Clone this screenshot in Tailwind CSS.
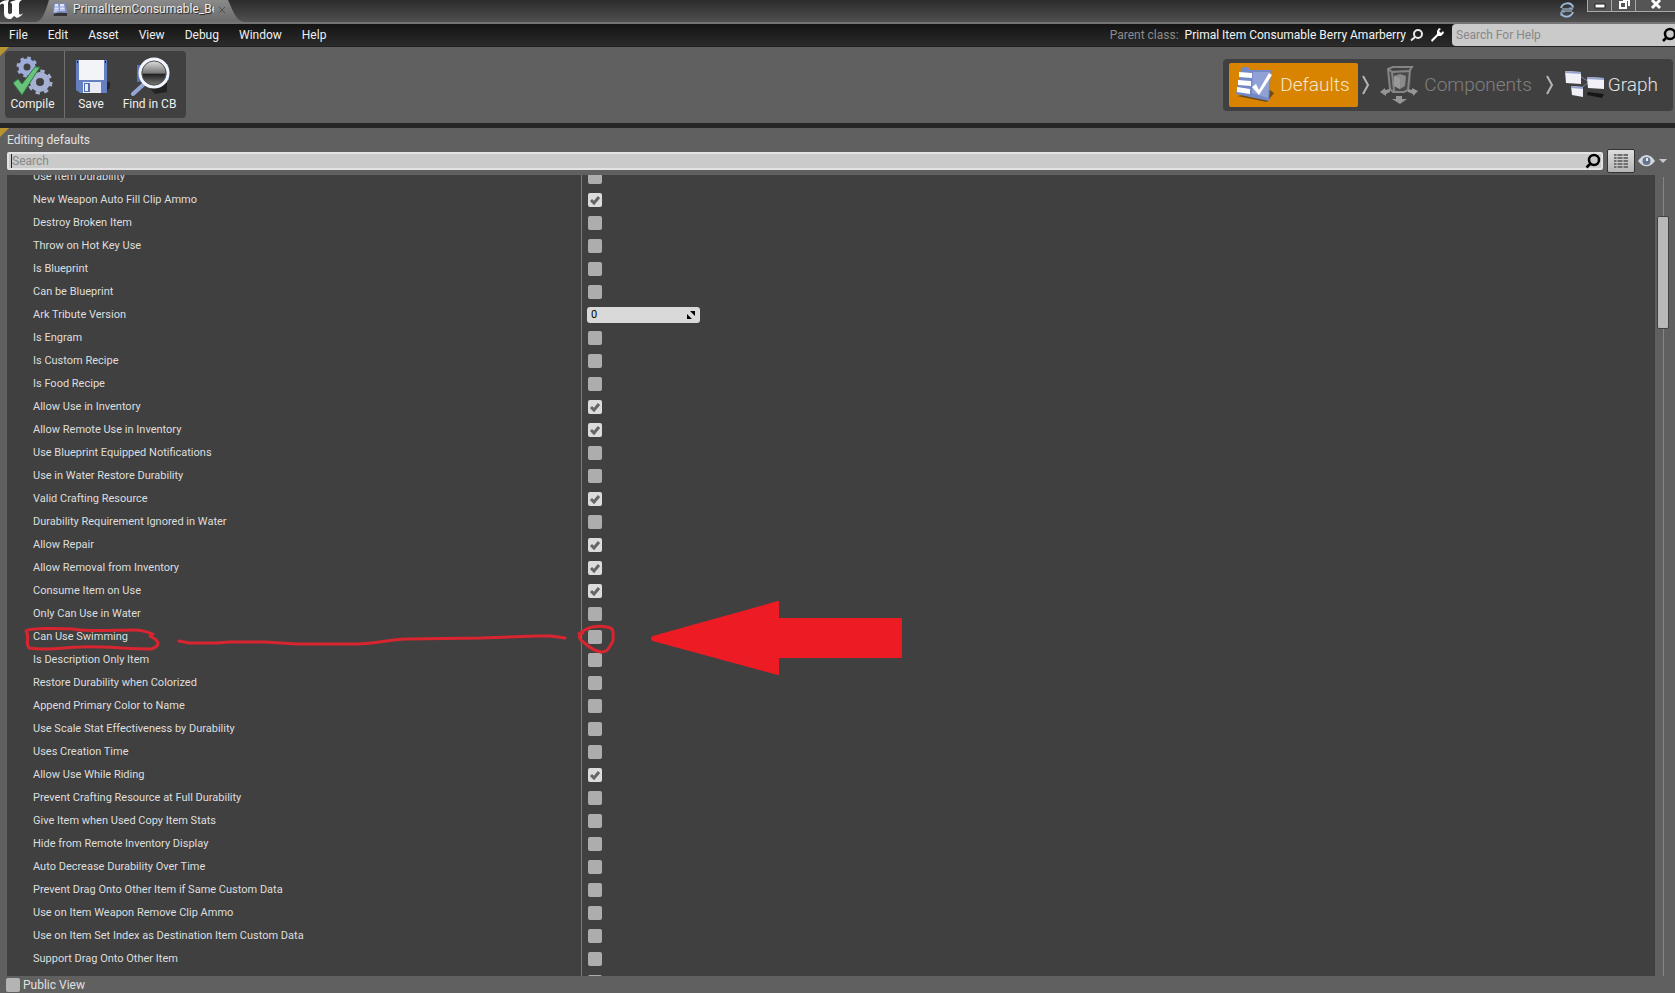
<!DOCTYPE html>
<html lang="en">
<head>
<meta charset="utf-8">
<title>PrimalItemConsumable_Berry</title>
<script src="https://cdn.jsdelivr.net/npm/@tailwindcss/browser@4"></script>
</head>
<body class="relative flex h-screen flex-col overflow-hidden bg-[#606060] font-['Roboto',sans-serif] text-xs leading-4 text-[#e0e0e0]">

<header class="flex h-[22px] shrink-0 items-start bg-linear-to-b from-[#2c2c2c] to-[#505050]">
  <svg class="h-[22px] w-9 shrink-0" viewBox="0 0 36 22" fill="#fff" aria-label="Unreal Engine" role="img">
    <path d="M0 3C2 1 5 0 9 0L8 3v9c0 2 2 3 4 1V4l-2-2 6-2h6c-2 1-3 2-3 5v8c0 2 2 2 4 0-1 3-4 4-6 5l-3-2-3 3c-5 0-7-2-7-6V5C3 3 1 4 0 5z"/>
  </svg>
  <div class="relative flex h-[22px] w-[208px] shrink-0 items-start">
    <svg class="absolute inset-0 h-[22px] w-[208px]" viewBox="0 0 208 22" aria-hidden="true">
      <defs><linearGradient id="tab" x2="0" y2="1"><stop stop-color="#8a8a8a"/><stop offset="1" stop-color="#6b6b6b"/></linearGradient></defs>
      <path d="M0 22c6-2 8-6 13-22h179c7 16 9 20 16 22z" fill="url(#tab)"/>
    </svg>
    <svg class="relative ml-4 mt-px h-4 w-4" viewBox="0 0 16 16" aria-hidden="true">
      <path d="M1 12l14 0v3l-13 0z" fill="#333"/><path d="M2 3l4-1 2 1 5-1 2 10-6-1-8 2z" fill="#7d92cd"/><path d="M3 3l3 0 1 7-5 1zM8 3l4 0 1 7-5 0z" fill="#dfe6fb"/><path d="M2 6h11M2 9h12" stroke="#8fa0d8"/>
    </svg>
    <span class="relative ml-[5px] mt-px w-[141px] overflow-hidden whitespace-nowrap text-[#ededed] [text-shadow:1px_1px_1px_#222]">PrimalItemConsumable_Be</span>
    <button class="relative ml-1 mt-1.5 h-2 w-2" aria-label="Close tab"><svg viewBox="0 0 8 8" class="h-2 w-2" stroke="#505050"><path d="M1 1l6 6M7 1l-6 6"/></svg></button>
  </div>
  <div class="ml-auto flex items-start">
    <svg class="mr-3 mt-0.5 h-4 w-4" viewBox="0 0 16 16" fill="none" aria-hidden="true">
      <path d="M2 6c2-6 10-6 12-1M14 10c-2 6-10 6-12 1" stroke="#9db9dc" stroke-width="2"/><path d="M14 3v3h-4M2 14v-4h4" stroke="#8aa9cf" stroke-width="1"/><path d="M3 7h11M2 9h11" stroke="#b9cfeb" stroke-width="1"/>
    </svg>
    <button class="flex h-3 w-[25px] justify-center border border-t-0 border-[#aaa] bg-[#555]" aria-label="Minimize"><svg class="h-3 w-3" viewBox="0 0 12 12"><path d="M1 4h10v4H1z" fill="#fff" stroke="#222"/></svg></button>
    <button class="flex h-3 w-6 justify-center border border-t-0 border-l-0 border-[#aaa] bg-[#555]" aria-label="Restore"><svg class="h-3 w-3" viewBox="0 0 12 12" fill="none" stroke="#fff" stroke-width="2"><path d="M2 2h6v6H2zM5 0h6v6"/></svg></button>
    <button class="flex h-3 w-[39px] justify-center border-b border-[#aaa] bg-[#555]" aria-label="Close"><svg class="h-3 w-3" viewBox="0 0 12 12" stroke="#fff" stroke-width="3"><path d="M2 0l8 8M10 0l-8 8"/></svg></button>
  </div>
</header>

<div class="flex h-6 shrink-0 items-center border-t-2 border-[#757575] bg-linear-to-b from-[#141414] to-[#2b2b2b]">
  <nav class="flex gap-5 pl-[9px] text-[#efefef]">
    <button>File</button><button>Edit</button><button>Asset</button><button>View</button><button>Debug</button><button>Window</button><button>Help</button>
  </nav>
  <div class="ml-auto flex h-full items-center">
    <span class="text-[#8c8c8c]">Parent class:</span>
    <a href="#" class="ml-1.5 text-[#f4f4f4]">Primal Item Consumable Berry Amarberry</a>
    <button class="ml-1" aria-label="Find parent class"><svg class="h-3.5 w-3.5" viewBox="0 0 14 14" fill="none" stroke="#e8e8e8" stroke-width="2"><circle cx="8" cy="6" r="4"/><path d="M5 9l-4 3.500"/></svg></button>
    <button class="ml-1.5" aria-label="Edit parent class"><svg class="h-3.5 w-3.5" viewBox="0 0 14 14"><path d="M9 0L7 3v3l-6 6 1 2 6-6h3l3-3-1-2-2 2-2-2 2-2z" fill="#fff"/></svg></button>
    <div class="ml-2 flex h-[22px] w-[223px] items-center overflow-hidden rounded-l-sm bg-[#cacaca]">
      <input type="text" aria-label="Search For Help" placeholder="Search For Help" class="ml-1 min-w-0 flex-1 outline-none placeholder:text-[#888]">
      <svg class="-mr-0.5 h-4 w-4 shrink-0" viewBox="0 0 16 16" fill="none" stroke="#000" stroke-width="2.500" aria-hidden="true"><circle cx="9" cy="7" r="5"/><path d="M5.500 10.500L2 14"/></svg>
    </div>
  </div>
</div>

<section class="relative flex h-[77px] shrink-0 items-start border-t border-[#222] pl-[5px] pr-0.5 pt-1">
  <svg class="absolute left-0 top-0 h-[9px] w-[9px]" viewBox="0 0 9 9" aria-hidden="true"><path d="M0 0h9L0 9z" fill="#b8952f"/></svg>
  <div class="relative flex h-[67px] items-stretch rounded-sm bg-[#404040] text-[#efefef] [text-shadow:1px_1px_1px_#000]">
    <button class="flex w-[60px] flex-col items-center border-r border-[#707070] pr-1 pt-[5px]">
      <svg class="h-10 w-10" viewBox="0 0 40 40" aria-hidden="true">
        <g transform="translate(14 11)" fill="none" stroke="#9dadd8"><circle r="6" stroke-width="5"/><circle r="9" stroke-width="3" stroke-dasharray="3.500 3.570"/></g>
        <g transform="translate(27 26)" fill="none" stroke="#a5b0d2"><circle r="7" stroke-width="6"/><circle r="11" stroke-width="3" stroke-dasharray="4.300 4.340"/></g>
        <path d="M0 27l5-4 4 5L22 11l5 0L9 39z" fill="#67c27a" stroke="#347746"/>
      </svg>
      <span>Compile</span>
    </button>
    <button class="flex w-[52px] flex-col items-center pt-[5px]">
      <svg class="h-10 w-10" viewBox="0 0 40 40" aria-hidden="true">
        <path d="M8 37h26l5-5v-6H9z" fill="#262626"/><path d="M5 4h31v33H9l-4-3z" fill="#6480c0"/><path d="M8 4h25v20H8z" fill="#f3f4f8"/><path d="M12 26h18v11H12z" fill="#e8ebf4"/><path d="M13 27h6v9h-6z" fill="#526fb1"/><path d="M14 28h3v7h-3z" fill="#e8ebf4"/><path d="M6 5h1v2H6zM34 5h1v2h-1z" fill="#222"/>
      </svg>
      <span>Save</span>
    </button>
    <button class="flex w-[69px] flex-col items-center pr-1 pt-[5px]">
      <svg class="h-10 w-10" viewBox="0 0 40 40" aria-hidden="true">
        <defs><linearGradient id="lens" x2="0" y2="1"><stop stop-color="#eee"/><stop offset=".5" stop-color="#777"/><stop offset=".55" stop-color="#222"/><stop offset="1" stop-color="#888"/></linearGradient></defs>
        <path d="M19 31l18-4v9l-12 2z" fill="#222"/><path d="M7 9l31-1 1 16-32 2z" fill="#5574b8"/><path d="M14 28L3 38" stroke="#94a7d6" stroke-width="4" stroke-linecap="round"/><circle cx="24" cy="17" r="14" fill="url(#lens)" stroke="#f2f5ff" stroke-width="3"/><circle cx="24" cy="17" r="12" fill="none" stroke="#555"/>
      </svg>
      <span class="whitespace-nowrap">Find in CB</span>
    </button>
  </div>

  <div class="ml-auto mt-2 flex h-[52px] items-center rounded-sm bg-[#404040] px-1.5 text-[19px] font-light leading-6">
    <button class="flex h-11 w-[129px] items-center rounded-xs bg-[#d98400] pl-1.5 text-[#f6e6cc]">
      <svg class="mr-1.5 h-9 w-[39px] shrink-0" viewBox="0 0 39 36" aria-hidden="true">
        <path d="M2 29l30 6 7-9-4-3z" fill="#6e4b19"/><path d="M6 2l2-2h5l2 3h21l-2 31L1 27z" fill="#7388c6"/><path d="M18 5h17l-2 26-16-5z" fill="#91a1d5"/><path d="M4 5l13 1v5L4 10zM3 13l13 1v5L3 18zM2 20l13 2v5L2 25z" fill="#fff"/><path d="M17 20l4-3 3 6L34 6l3 2-13 20z" fill="#fff"/>
      </svg>
      <span>Defaults</span>
    </button>
    <svg class="ml-1 h-6 w-2" viewBox="0 0 8 24" fill="none" stroke="#b5b5b5" stroke-width="2" aria-hidden="true"><path d="M1 3l5 9-5 9"/></svg>
    <button class="ml-2.5 flex h-11 items-center text-[#808080]" disabled>
      <svg class="mr-1.5 h-[38px] w-[38px]" viewBox="0 0 38 38" aria-hidden="true">
        <path d="M10 4v18l3 3 15-1 3-4V3z" fill="#4b4b4b"/><path d="M8 3l5-2h19l-2 3-2 20-4 2H13l-3-3zM8 3l4 3 18-1M12 6l2 19" fill="none" stroke="#858585" stroke-width="2"/><path d="M14 10l6-2 6 2-1 10-5 3-6-3z" fill="#8a8a8a"/><path d="M14 10l6 2v11l-6-3z" fill="#999"/><path d="M0 26l5-4v2l5-1v3l-4 2v2zM38 25l-6-3v2l-4-1v3l5 2v2zM16 30h6v3h5l-7 5-8-5h4z" fill="#969696"/>
      </svg>
      <span>Components</span>
    </button>
    <svg class="ml-3.5 h-6 w-2" viewBox="0 0 8 24" fill="none" stroke="#b5b5b5" stroke-width="2" aria-hidden="true"><path d="M1 3l5 9-5 9"/></svg>
    <button class="ml-2.5 flex h-11 items-center pr-[9px] text-[#e2e2e2]">
      <svg class="mr-1 h-8 w-10" viewBox="0 0 40 32" aria-hidden="true">
        <path d="M24 23l16 2-2 4-15-3z" fill="#161616"/><path d="M16 7l9 6-8 6" fill="none" stroke="#7382a8"/><path d="M1 2l16 1v12L2 14zM23 8l17 1v11l-16-1zM7 17l12 1v10L8 26z" fill="#f0f0f6"/><path d="M1 2l16 1v2L1 4zM23 8l17 1v2l-17-1zM7 17l12 1v2L7 19z" fill="#95a4cf"/>
      </svg>
      <span>Graph</span>
    </button>
  </div>
</section>

<main class="relative flex min-h-0 flex-1 flex-col border-t-5 border-[#262626]">
  <svg class="absolute left-0 top-0 h-[9px] w-[9px]" viewBox="0 0 9 9" aria-hidden="true"><path d="M0 0h9L0 9z" fill="#b8952f"/></svg>
  <h1 class="mt-1 pl-[7px]">Editing defaults</h1>
  <div class="mt-px flex h-6 shrink-0 items-center pl-[7px] pr-2">
    <div class="flex h-[18px] min-w-0 flex-1 items-center rounded-xs border-2 border-[#e3e3e3] bg-[#cacaca]">
      <span class="ml-0.5 h-3.5 w-px bg-[#222]"></span>
      <input type="text" aria-label="Search" placeholder="Search" class="min-w-0 flex-1 outline-none placeholder:text-[#888]">
      <svg class="h-4 w-4 shrink-0" viewBox="0 0 16 16" fill="none" stroke="#000" stroke-width="2.500" aria-hidden="true"><circle cx="9" cy="7" r="5"/><path d="M5.500 10.500L1.500 14.500"/></svg>
    </div>
    <button class="ml-1 flex h-6 w-7 items-center justify-center rounded-xs border border-[#333] bg-linear-to-b from-[#dedede] to-[#b5b5b5]" aria-label="Property matrix">
      <svg class="h-4 w-4" viewBox="0 0 16 16" stroke="#707070" stroke-width="2" aria-hidden="true"><path d="M1 2h14M1 5h14M1 8h14M1 11h14M1 14h14"/><path d="M4 1v14M10 1v14" stroke="#c8c8c8" stroke-width="1"/></svg>
    </button>
    <button class="ml-[3px] flex items-center gap-1" aria-label="View options">
      <svg class="h-3 w-[17px]" viewBox="0 0 17 12" aria-hidden="true"><path d="M0 6c5-8 12-8 17 0-5 7-12 7-17 0z" fill="#d3d8df"/><circle cx="8.500" cy="6" r="4" fill="#65758f"/><path d="M8 3h2v3H8z" fill="#e6eaf2"/></svg>
      <svg class="h-1 w-2" viewBox="0 0 8 4" aria-hidden="true"><path d="M0 0h8L4 4z" fill="#c8c8c8"/></svg>
    </button>
  </div>
  <div class="mt-0.5 flex min-h-0 flex-1 pl-[7px] pr-1.5">
    <div class="min-w-0 flex-1 overflow-hidden bg-[#404040]">
      <div id="props" class="-mt-2.5 text-[11px]"></div>
    </div>
    <div class="relative ml-0.5 flex w-3 justify-center pt-0.5">
      <div class="h-full w-px bg-[#858585]"></div>
      <div class="absolute inset-x-0 top-[41px] h-[113px] rounded-xs border border-[#404040] bg-[#b8b8b8]"></div>
    </div>
  </div>
</main>

<footer class="flex h-[17px] shrink-0 items-center gap-[3px] pl-1.5 pt-px">
  <input id="public" type="checkbox" class="h-3.5 w-3.5 appearance-none rounded-xs bg-[#b4b4b4]">
  <label for="public">Public View</label>
</footer>

<svg class="pointer-events-none absolute left-0 top-[590px] h-[110px] w-[920px]" viewBox="0 590 920 110" fill="none" stroke="#d9252f" stroke-width="3" stroke-linecap="round" stroke-linejoin="round" aria-hidden="true">
  <path d="M26 631c2-3 32-3 46-2 20 3 40 1 63 1 7 0 12 2 18 4l-3 2 5 3c6 5 2 8-4 10-20 0-52-3-70-2-15 0-32 4-52 1-4-6 1-12-3-17z"/>
  <path d="M179 641l10 2h28l12-1h36l32 2h55c20 0 35-4 54-5l75-1 56-2h14l14 2"/>
  <path d="M579 634c8-7 18-9 28-7 8 1 6 6 6 14-5 8-5 11-12 11-8-1-13-6-19-11-4-3-3-6 1-8"/>
  <path d="M653 637l125-35v17h123v38H778v17l-125-34q-2-1 0-3z" fill="#ed1c24" stroke="#ed1c24" stroke-width="2"/>
</svg>

<script>
const on = new Set(['New Weapon Auto Fill Clip Ammo','Allow Use in Inventory','Allow Remote Use in Inventory','Valid Crafting Resource','Allow Repair','Allow Removal from Inventory','Consume Item on Use','Allow Use While Riding']);
const names = ['Use Item Durability','New Weapon Auto Fill Clip Ammo','Destroy Broken Item','Throw on Hot Key Use','Is Blueprint','Can be Blueprint','Ark Tribute Version','Is Engram','Is Custom Recipe','Is Food Recipe','Allow Use in Inventory','Allow Remote Use in Inventory','Use Blueprint Equipped Notifications','Use in Water Restore Durability','Valid Crafting Resource','Durability Requirement Ignored in Water','Allow Repair','Allow Removal from Inventory','Consume Item on Use','Only Can Use in Water','Can Use Swimming','Is Description Only Item','Restore Durability when Colorized','Append Primary Color to Name','Use Scale Stat Effectiveness by Durability','Uses Creation Time','Allow Use While Riding','Prevent Crafting Resource at Full Durability','Give Item when Used Copy Item Stats','Hide from Remote Inventory Display','Auto Decrease Durability Over Time','Prevent Drag Onto Other Item if Same Custom Data','Use on Item Weapon Remove Clip Ammo','Use on Item Set Index as Destination Item Custom Data','Support Drag Onto Other Item',''];
document.getElementById('props').innerHTML = names.map((n, i) => {
  const field = n === 'Ark Tribute Version'
    ? `<div class="ml-[5px] flex h-4 w-[113px] items-center rounded-[3px] bg-[#d9d9d9] px-1 text-black"><input id="p${i}" type="text" value="0" class="min-w-0 flex-1 outline-none"><svg class="mr-px h-2 w-2" viewBox="0 0 8 8" aria-hidden="true"><path d="M3 0h5v5zM0 3v5h5z"/></svg></div>`
    : `<span class="relative ml-1.5 flex h-3.5 w-3.5"><input id="p${i}" type="checkbox" ${on.has(n) ? 'checked' : ''} ${n ? '' : 'aria-label="Next property"'} class="peer h-3.5 w-3.5 appearance-none rounded-xs bg-[#adadad] checked:bg-[#dcdcdc]"><svg class="pointer-events-none absolute inset-0 hidden h-3.5 w-3.5 peer-checked:block" viewBox="0 0 14 14" fill="none" stroke="#666" stroke-width="3" aria-hidden="true"><path d="M3 7l3 3 5-6"/></svg></span>`;
  return `<div class="flex h-[23px] items-stretch"><label for="p${i}" class="w-[575px] shrink-0 border-r border-[#7a7a7a] pl-[26px] pt-1 text-[#dedede]">${n}</label><div class="flex items-center">${field}</div></div>`;
}).join('');
</script>
</body>
</html>
